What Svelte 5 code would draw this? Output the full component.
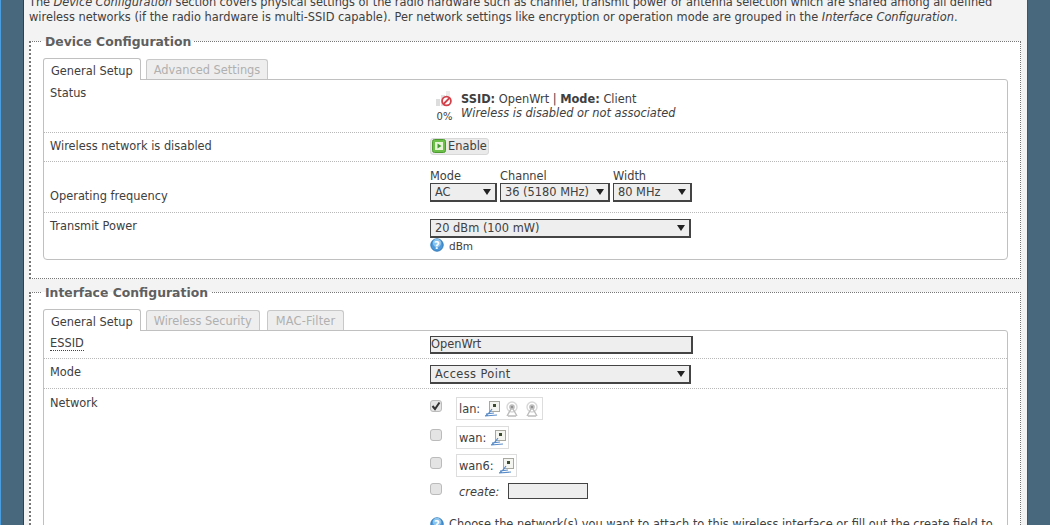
<script>
  const eth = [1];
</script>

{#snippet help()}
  <svg class="help" width="14" height="14" viewBox="0 0 14 14">
    <circle cx="7" cy="7" r="6.2" fill="#4d98d8" stroke="#2f78b8" />
    <circle cx="7" cy="5" r="4.2" fill="#8cc4ee" />
    <text x="7" y="10.6" text-anchor="middle" class="q">?</text>
  </svg>
{/snippet}

{#snippet ethIcon()}
  <svg class="ni" width="16" height="16" viewBox="0 0 16 16">
    <rect x="5.5" y="0.5" width="10" height="10" fill="#f4f4f0" stroke="#a8a8a0" />
    <rect x="9" y="3" width="3" height="3" fill="#3c4a30" />
    <path d="M8 8 L5 12 Q2 15 1 15 L13 14 M2 13 L10 12" fill="none" stroke="#5a8cc8" stroke-width="1.2" />
  </svg>
{/snippet}

{#snippet wifiIcon()}
  <svg class="ni" width="16" height="16" viewBox="0 0 16 16">
    <circle cx="8" cy="6" r="5" fill="none" stroke="#d8d8d8" stroke-width="1.4" />
    <circle cx="8" cy="6" r="2.8" fill="#bcbcbc" />
    <circle cx="8" cy="6" r="1.1" fill="#888" />
    <path d="M7 8 L3 15 M9 8 L13 15 M4 15 H12" stroke="#bcbcbc" stroke-width="1.4" fill="none" />
  </svg>
{/snippet}

<div class="page">
  <div class="rail left"></div>
  <main>
    <p class="intro">The <em>Device Configuration</em> section covers physical settings of the radio hardware such as channel, transmit power or antenna selection which are shared among all defined wireless networks (if the radio hardware is multi-SSID capable). Per network settings like encryption or operation mode are grouped in the <em>Interface Configuration</em>.</p>

    <fieldset class="first">
      <legend>Device Configuration</legend>
      <ul class="tabs">
        <li class="active">General Setup</li>
        <li>Advanced Settings</li>
      </ul>
      <div class="box">
        <div class="row status">
          <div class="label">Status</div>
          <div class="field stat">
            <div class="sig">
              <svg width="18" height="17" viewBox="0 0 18 17">
                <rect x="1" y="9" width="4" height="7" fill="#ddd" />
                <rect x="6" y="5" width="4" height="11" fill="#e2e2e2" />
                <rect x="11" y="1" width="4" height="15" fill="#ececec" />
                <circle cx="11.5" cy="11" r="4.4" fill="#fff" stroke="#d2404a" stroke-width="1.8" />
                <path d="M8.5 14 L14.5 8" stroke="#d2404a" stroke-width="1.8" />
              </svg>
              <small>0%</small>
            </div>
            <div class="stxt"><b>SSID:</b> OpenWrt | <b>Mode:</b> Client<br /><em>Wireless is disabled or not associated</em></div>
          </div>
        </div>
        <div class="row disabled">
          <div class="label">Wireless network is disabled</div>
          <div class="field">
            <button class="enable">
              <svg width="14" height="14" viewBox="0 0 14 14">
                <rect x="0.5" y="0.5" width="13" height="13" rx="2" fill="#6cc04a" stroke="#4c9a30" />
                <rect x="3" y="3" width="8" height="8" fill="#e8f4d8" />
                <path d="M5.5 4.5 L9.5 7 L5.5 9.5 Z" fill="#3f9a2e" />
              </svg>Enable
            </button>
          </div>
        </div>
        <div class="row freq">
          <div class="label bottom">Operating frequency</div>
          <div class="field triple">
            <label>Mode<span class="sel w1">AC</span></label>
            <label>Channel<span class="sel w2">36 (5180 MHz)</span></label>
            <label>Width<span class="sel w3">80 MHz</span></label>
          </div>
        </div>
        <div class="row power">
          <div class="label">Transmit Power</div>
          <div class="field">
            <span class="sel wide">20 dBm (100 mW)</span>
            <div class="hint">{@render help()}<span>dBm</span></div>
          </div>
        </div>
      </div>
    </fieldset>

    <fieldset class="second">
      <legend>Interface Configuration</legend>
      <ul class="tabs">
        <li class="active">General Setup</li>
        <li>Wireless Security</li>
        <li class="mac">MAC-Filter</li>
      </ul>
      <div class="box">
        <div class="row essid">
          <div class="label"><abbr>ESSID</abbr></div>
          <div class="field"><span class="input">OpenWrt</span></div>
        </div>
        <div class="row mode">
          <div class="label">Mode</div>
          <div class="field"><span class="sel wide ap">Access Point</span></div>
        </div>
        <div class="row net">
          <div class="label">Network</div>
          <div class="field netf">
            <div class="nrow r1"><span class="cb on"><svg width="10" height="10" viewBox="0 0 10 10"><path d="M1.5 5 L4 8 L8.5 1.5" fill="none" stroke="#333" stroke-width="2" /></svg></span><span class="nb">lan: {@render ethIcon()}{@render wifiIcon()}{@render wifiIcon()}</span></div>
            <div class="nrow r2"><span class="cb"></span><span class="nb">wan: {@render ethIcon()}</span></div>
            <div class="nrow r3"><span class="cb"></span><span class="nb">wan6: {@render ethIcon()}</span></div>
            <div class="nrow create"><span class="cb"></span><em>create:</em><span class="cinput"></span></div>
            <div class="hint long">{@render help()}<span>Choose the network(s) you want to attach to this wireless interface or fill out the create field to</span></div>
          </div>
        </div>
      </div>
    </fieldset>
  </main>
  <div class="rail right"></div>
</div>

<style>
  :global(body) { margin: 0; overflow: hidden; background: #fff; }
  .page {
    display: flex; width: 1050px; height: 525px; overflow: hidden;
    font: 11.4px/14px "DejaVu Sans", Verdana, sans-serif; color: #404040;
  }
  .rail { background: #48687e; flex: none; }
  .left { width: 22px; border-left: 1px solid #4a9ee0; border-right: 1px solid #3d3d3d; }
  .right { width: 22px; border-left: 1px solid #3d5566; flex: 1; }
  main { width: 1003px; background: #f3f3f3; flex: none; padding: 0 6px 0 5px; box-sizing: border-box; }
  .intro { margin: -5px 0 0; line-height: 15px; }
  .intro::first-line { letter-spacing: -0.07px; }
  fieldset {
    margin: 0; padding: 0 12px 18px 12px; background: #fff;
    border: 1px dotted #777; border-width: 1px 1px 1px 2px; min-width: 0;
  }
  .first { margin-top: 9px; height: 245px; box-sizing: border-box; }
  .second { margin-top: 6px; }
  legend { font-size: 12.4px; font-weight: bold; color: #606060; padding: 0 3px; margin-left: -1px; line-height: 15px; }
  .tabs { list-style: none; margin: 0; padding: 8px 0 0; display: flex; gap: 5px; height: 22px; align-items: flex-end; }
  .tabs li {
    height: 20px; line-height: 21px; box-sizing: border-box; padding: 0 7px; color: #b0b0b0;
    background: #eee; border: 1px solid #c8c8c8; border-bottom: 0; border-radius: 3px 3px 0 0;
    position: relative;
  }
  .tabs li.active { height: 22px; background: #fff; color: #404040; margin-bottom: -1px; line-height: 24px; z-index: 1; border-color: #c0c0c0; }
  .tabs li.mac { margin-left: 2px; padding: 0 8px; letter-spacing: 0.2px; }
  .box { border: 1px solid #c0c0c0; border-radius: 0 3px 4px 4px; background: #fff; }
  .row { display: flex; padding: 0 6px; border-bottom: 1px dotted #b8b8b8; box-sizing: border-box; }
  .row:last-child { border-bottom: 0; }
  .label { width: 380px; flex: none; }
  .bottom { align-self: flex-end; padding-bottom: 9px; }
  .status { height: 53px; padding-top: 6px; }
  .stat { display: flex; padding: 6px 0 0 5px; gap: 7px; }
  .sig { width: 19px; text-align: center; margin-top: -2px; height: 32px; }
  .sig svg { display: block; }
  .sig small { font-size: 10px; line-height: 10px; display: block; margin-top: 5px; }
  .stxt { line-height: 14px; }
  .disabled { height: 29px; align-items: center; }
  .disabled .label { margin-top: -2px; }
  .enable {
    display: inline-flex; align-items: center; gap: 2px; height: 17px; padding: 0 1px 0 1px;
    background: #eaeaea; border: 1px solid #d8d8d8; border-radius: 3px; font: inherit; color: #404040;
  }
  .freq { height: 51px; padding-top: 8px; }
  .triple { display: flex; gap: 3px; }
  .triple label { display: flex; flex-direction: column; line-height: 13px; }
  .sel {
    display: block; box-sizing: border-box; height: 19px; line-height: 16px; background: #eee;
    border: 1px solid #444; border-width: 1px 2px 2px 1px; padding-left: 4px; position: relative; color: #404040;
  }
  .sel::after {
    content: ""; position: absolute; right: 4px; top: 5px; border: 4px solid transparent;
    border-top: 6px solid #222; border-bottom: 0;
  }
  .w1 { width: 67px; }
  .w2 { width: 110px; }
  .w3 { width: 79px; }
  .wide { width: 261px; }
  .ap { letter-spacing: 0.4px; }
  .power { height: 46px; padding-top: 6px; }
  .hint { display: flex; align-items: center; gap: 5px; margin-top: -1px; font-size: 10.5px; }
  .hint span { padding-top: 2px; }
  .help { flex: none; }
  .q { font: bold 10px "DejaVu Sans", sans-serif; fill: #fff; }
  .essid { height: 28px; padding-top: 5px; }
  .input {
    display: block; box-sizing: border-box; width: 263px; height: 18px; line-height: 15px; background: #eee;
    border: 1px solid #444; border-width: 1px 2px 2px 1px; padding-left: 0;
  }
  abbr { border-bottom: 1px dotted #444; }
  .mode { height: 30px; padding-top: 6px; }
  .net { padding-top: 7px; height: 200px; }
  .netf { padding-top: 1px; }
  .nrow { display: flex; align-items: flex-start; }
  .r1 { height: 29px; }
  .r2 { height: 28px; }
  .r3 { height: 28px; }
  .create { height: 26px; }
  .cb {
    width: 12px; height: 12px; box-sizing: border-box; border: 1px solid #bbb; border-radius: 3px; background: #e4e4e4;
    margin: 3px 14px 0 0; display: flex; align-items: center; justify-content: center; flex: none;
  }
  .create .cb { margin-top: 1px; }
  .nb { display: inline-flex; align-items: center; gap: 4px; border: 1px solid #ddd; height: 23px; padding: 0 2px 0 2px; box-sizing: border-box; background: #fff; }
  .ni { flex: none; }
  .create em { margin: 3px 9px 0 3px; }
  .cinput { width: 80px; height: 16px; box-sizing: border-box; border: 1px solid #444; background: #eee; margin-top: 1px; }
  .long { margin-top: 9px; white-space: nowrap; font-size: 11.4px; gap: 5px; }
  .long span { padding-top: 0; }
</style>
